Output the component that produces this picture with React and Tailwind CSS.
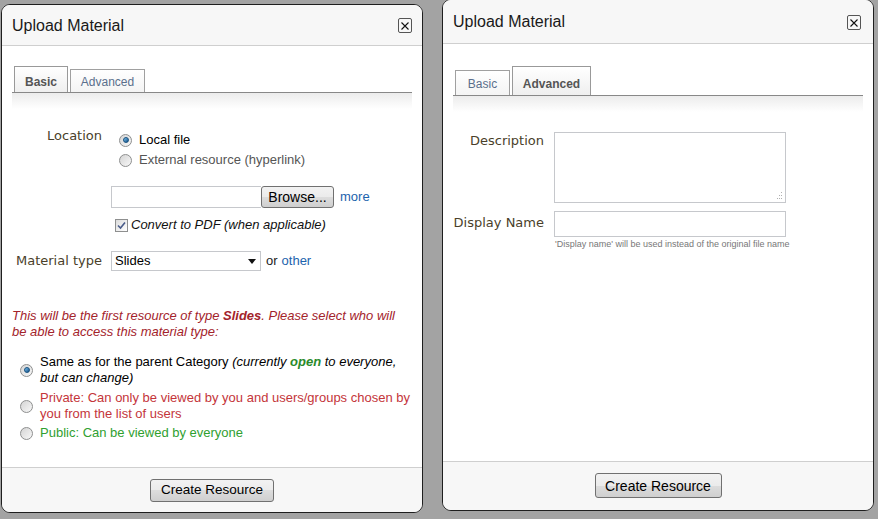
import React from "react";

const sans = { fontFamily: '"Liberation Sans", Arial, sans-serif' };
const labelFont = { fontFamily: '"DejaVu Sans", Verdana, sans-serif' };

function Radio({ checked }) {
    return (
        <span className="inline-flex w-[13px] h-[13px] shrink-0 items-center justify-center rounded-full border border-[#8e8f8f] bg-gradient-to-br from-[#d4d4d4] to-[#f8f8f8]">
            {checked && (
                <span className="w-[6px] h-[6px] rounded-full bg-gradient-to-br from-[#7ec3ef] to-[#0b4f86] border border-[#17507e]"></span>
            )}
        </span>
    );
}

function Button({ children, className }) {
    return (
        <button
            className={
                "border border-[#707070] rounded-[3px] bg-[linear-gradient(#f2f2f2,#ebebeb_50%,#dddddd_50%,#cfcfcf)] text-black leading-none " +
                className
            }
        >
            {children}
        </button>
    );
}

function Header({ height, closeClass }) {
    return (
        <div className={"flex items-center justify-between bg-[#f7f7f7] border-b border-[#cfcfcf] shrink-0 pt-[1px] " + height}>
            <span className="text-[16px] text-[#1a1a1a] ml-[10px]">Upload Material</span>
            <span className={"w-[14px] h-[15px] border border-[#555] rounded-[2px] flex items-center justify-center " + closeClass}>
                <svg width="10" height="10" viewBox="0 0 10 10">
                    <path d="M1.5 1.5 L8.5 8.5 M8.5 1.5 L1.5 8.5" stroke="#111" strokeWidth="1.1" />
                </svg>
            </span>
        </div>
    );
}

function Tabs({ active, top }) {
    const on = "border border-[#999] border-b-0 bg-gradient-to-b from-white to-[#efefef] text-[#555] font-bold";
    const off = "border border-[#a0a0a0] border-b-0 bg-gradient-to-b from-white to-[#f4f4f4] text-[#5a6f8c]";
    return (
        <div className={"mx-[10px] " + top}>
            <div className="flex items-end border-b border-[#888] pl-[2px] gap-[2px] text-[12px]">
                {active === "basic" ? (
                    <>
                        <div className={"w-[54px] h-[26px] flex items-center justify-center pt-[4px] " + on}>Basic</div>
                        <div className={"w-[75px] h-[23px] flex items-center justify-center pt-[2px] " + off}>Advanced</div>
                    </>
                ) : (
                    <>
                        <div className={"w-[55px] h-[25px] flex items-center justify-center pt-[2px] " + off}>Basic</div>
                        <div className={"w-[79px] h-[29px] flex items-center justify-center pt-[5px] " + on}>Advanced</div>
                    </>
                )}
            </div>
            <div className="h-[16px] bg-gradient-to-b from-[#ececec] to-white"></div>
        </div>
    );
}

function BasicDialog() {
    return (
        <div className="ml-[1px] mt-[4px] w-[422px] h-[509px] flex flex-col bg-white border border-[#1e1e1e] rounded-[9px] overflow-hidden">
            <Header height="h-[41px]" closeClass="mr-[10px]" />
            <div className="flex-1 text-[13px]">
                <Tabs active="basic" top="mt-[20px]" />

                {/* location */}
                <div className="flex mt-[21px]">
                    <div className="w-[100px] text-right text-[#4a3f2a] text-[13px] leading-[16px] mt-[-2px]" style={labelFont}>Location</div>
                    <div className="ml-[9px]">
                        <div className="flex items-center h-[20px] pl-[8px]">
                            <Radio checked />
                            <span className="ml-[7px] text-black">Local file</span>
                        </div>
                        <div className="flex items-center h-[20px] pl-[8px]">
                            <Radio />
                            <span className="ml-[7px] text-[#555]">External resource (hyperlink)</span>
                        </div>
                        <div className="flex items-center mt-[16px]">
                            <div className="w-[150px] h-[22px] border border-[#c6c8cc] border-r-0 bg-white"></div>
                            <Button className="w-[73px] h-[22px] text-[14px]">Browse...</Button>
                            <span className="ml-[6px] text-[#1c63ad]">more</span>
                        </div>
                        <div className="flex items-center mt-[9px] h-[16px] pl-[4px]">
                            <span className="w-[13px] h-[13px] border border-[#8e8f8f] bg-gradient-to-br from-[#dcdcdc] to-white flex items-center justify-center">
                                <svg width="9" height="9" viewBox="0 0 9 9">
                                    <path d="M1 4.5 L3.5 7 L8 1.5" stroke="#4a5c8a" strokeWidth="1.6" fill="none" />
                                </svg>
                            </span>
                            <span className="ml-[3px] italic text-[#111]">Convert to PDF (when applicable)</span>
                        </div>
                    </div>
                </div>

                {/* material type */}
                <div className="flex items-center mt-[18px]">
                    <div className="w-[100px] text-right text-[#4a3f2a] text-[13px]" style={labelFont}>Material type</div>
                    <div className="ml-[9px] w-[150px] h-[20px] border border-[#c6c8cc] flex items-center justify-between px-[3px]">
                        <span>Slides</span>
                        <svg width="8" height="5" viewBox="0 0 8 5" className="mr-[1px]">
                            <path d="M0 0 L8 0 L4 5 Z" fill="#111" />
                        </svg>
                    </div>
                    <span className="ml-[5px] text-[#222]">or</span>
                    <span className="ml-[4px] text-[#1c63ad]">other</span>
                </div>

                <p className="mt-[37px] ml-[10px] mr-[10px] italic text-[#a3232b] leading-[16px]">
                    This will be the first resource of type <b>Slides</b>. Please select who will be able to access this material type:
                </p>

                <div className="mt-[14px] ml-[18px] mr-[8px] leading-[16px]">
                    <div className="flex items-center">
                        <Radio checked />
                        <span className="ml-[7px] text-black">
                            Same as for the parent Category{" "}
                            <i>
                                (currently <b className="text-[#2a8a2a]">open</b> to everyone, but can change)
                            </i>
                        </span>
                    </div>
                    <div className="flex items-center mt-[4px]">
                        <Radio />
                        <span className="ml-[7px] text-[#c4353a]">
                            Private: Can only be viewed by you and users/groups chosen by you from the list of users
                        </span>
                    </div>
                    <div className="flex items-center mt-[3px]">
                        <Radio />
                        <span className="ml-[7px] text-[#30a030]">Public: Can be viewed by everyone</span>
                    </div>
                </div>
            </div>
            <div className="h-[45px] shrink-0 bg-[#f7f7f7] border-t border-[#cfcfcf] flex items-center justify-center">
                <Button className="w-[124px] h-[23px] text-[13.5px]">Create Resource</Button>
            </div>
        </div>
    );
}

function AdvancedDialog() {
    return (
        <div className="ml-[19px] mt-[-1px] w-[432px] h-[512px] flex flex-col bg-white border border-[#1e1e1e] rounded-[9px] overflow-hidden">
            <Header height="h-[44px]" closeClass="mr-[12px] mt-[1px]" />
            <div className="flex-1 text-[13px]">
                <Tabs active="advanced" top="mt-[22px]" />

                <div className="flex mt-[20px]">
                    <div className="w-[101px] text-right text-[#4a3f2a] text-[13px] mt-[-1px]" style={labelFont}>Description</div>
                    <div className="ml-[10px] w-[232px] h-[71px] border border-[#c6c8cc] relative">
                        <svg width="8" height="8" viewBox="0 0 8 8" className="absolute right-[2px] bottom-[2px]">
                            <g fill="#b0b0b0">
                                <rect x="6" y="0" width="1" height="1" />
                                <rect x="4" y="3" width="1" height="1" />
                                <rect x="6" y="3" width="1" height="1" />
                                <rect x="2" y="6" width="1" height="1" />
                                <rect x="4" y="6" width="1" height="1" />
                                <rect x="6" y="6" width="1" height="1" />
                            </g>
                        </svg>
                    </div>
                </div>

                <div className="flex items-center mt-[8px]">
                    <div className="w-[101px] text-right text-[#4a3f2a] text-[13px] mt-[-3px]" style={labelFont}>Display Name</div>
                    <div className="ml-[10px] w-[232px] h-[26px] border border-[#c6c8cc]"></div>
                </div>
                <div className="ml-[112px] mt-[1px] text-[9px] text-[#777]">
                    'Display name' will be used instead of the original file name
                </div>
            </div>
            <div className="h-[49px] shrink-0 bg-[#f7f7f7] border-t border-[#cfcfcf] flex items-center justify-center">
                <Button className="w-[127px] h-[25px] text-[14px] mt-[-1px]">Create Resource</Button>
            </div>
        </div>
    );
}

export default function App() {
    return (
        <div className="w-[878px] h-[519px] bg-[#a3a3a3] flex items-start overflow-hidden" style={sans}>
            <BasicDialog />
            <AdvancedDialog />
        </div>
    );
}
